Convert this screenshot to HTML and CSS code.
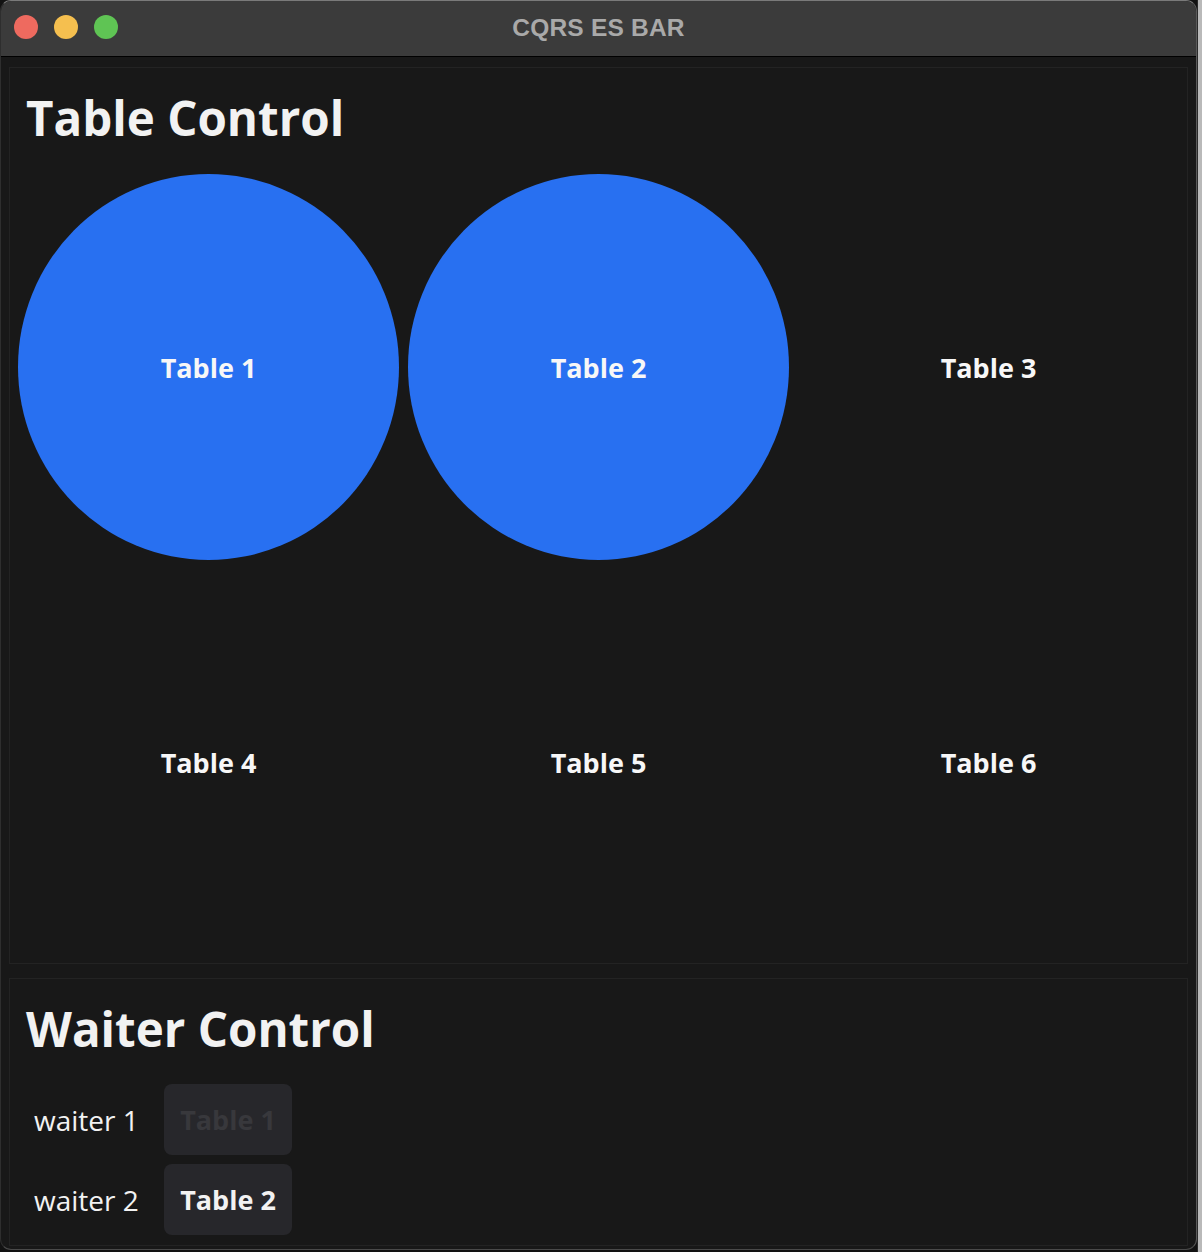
FILE: index.html
```html
<!DOCTYPE html>
<html>
<head>
<meta charset="utf-8">
<title>CQRS ES BAR</title>
<link rel="stylesheet" href="styles.css">
</head>
<body>
<div class="screen">
  <div class="window">
    <div class="titlebar">
      <div class="lights">
        <span class="light red"></span>
        <span class="light yellow"></span>
        <span class="light green"></span>
      </div>
      <div class="wtitle">CQRS ES BAR</div>
    </div>
    <div class="content">
      <section class="panel tables-panel">
        <h1 class="ptitle">Table Control</h1>
        <div class="table-grid">
          <div class="table active">Table 1</div>
          <div class="table active">Table 2</div>
          <div class="table">Table 3</div>
          <div class="table">Table 4</div>
          <div class="table">Table 5</div>
          <div class="table">Table 6</div>
        </div>
      </section>
      <section class="panel waiters-panel">
        <h1 class="ptitle">Waiter Control</h1>
        <div class="waiters">
          <div class="waiter-row">
            <span class="wname">waiter 1</span>
            <button class="tbtn disabled">Table 1</button>
          </div>
          <div class="waiter-row">
            <span class="wname">waiter 2</span>
            <button class="tbtn">Table 2</button>
          </div>
        </div>
      </section>
    </div>
  </div>
  <div class="desk"></div>
</div>
</body>
</html>
```
FILE: styles.css
```css
* { box-sizing: border-box; }
html, body { margin: 0; padding: 0; background: #121212; }
body { width: 1202px; height: 1252px; overflow: hidden; }

.screen { display: flex; height: 1252px; }

.window {
  width: 1197px;
  height: 1250px;
  border: 1px solid #2e2e2e;
  border-top-color: #7a7a7a;
  border-right-color: #5a5a5a;
  border-bottom-color: #4a4a4a;
  border-radius: 11px;
  overflow: hidden;
  background: #181818;
  display: flex;
  flex-direction: column;
}

.desk {
  width: 5px;
  background: #b9b9b9;
  border-left: 1px solid #2a2a2a;
}

.titlebar {
  height: 56px;
  flex: none;
  background: #3b3b3b;
  border-bottom: 1px solid #000;
  position: relative;
  display: flex;
  align-items: center;
  justify-content: center;
}
.lights {
  position: absolute;
  left: 13px;
  top: 14px;
  display: flex;
  gap: 16px;
}
.light { width: 24px; height: 24px; border-radius: 50%; display: block; }
.red { background: #ee6a5f; }
.yellow { background: #f5bf4f; }
.green { background: #5fc454; }
.wtitle {
  font-family: "Liberation Sans", Arial, sans-serif;
  font-weight: 700;
  font-size: 24.5px;
  color: #a9a9a9;
  letter-spacing: 0.2px;
  margin-top: -2px;
}

.content {
  padding: 10px 8px 0 8px;
  display: flex;
  flex-direction: column;
  gap: 14px;
  font-family: "Open Sans", "Noto Sans", sans-serif;
  color: #f2f2f2;
}

.panel {
  border: 1px solid #232323;
  background: #181818;
}

.ptitle {
  margin: 0;
  font-size: 47.5px;
  font-weight: 700;
  line-height: 66px;
  padding: 17px 0 0 16px;
  color: #f2f2f2;
}

.tables-panel { height: 897px; padding: 0 8px 8px 8px; }
.tables-panel .ptitle { padding-left: 8px; }

.table-grid {
  margin-top: 23px;
  display: grid;
  grid-template-columns: repeat(3, 1fr);
  grid-template-rows: 386px 386px;
  column-gap: 9px;
  row-gap: 9px;
}

.table {
  display: flex;
  align-items: center;
  justify-content: center;
  font-size: 27px;
  font-weight: 700;
  color: #f7f7f7;
  border-radius: 50%;
}
.table.active { background: #2870f1; }

.waiters-panel { padding: 0 0 9px 8px; height: 268px; }
.waiters-panel .ptitle { padding-left: 8px; padding-top: 17px; }

.waiters {
  margin-top: 22px;
  display: flex;
  flex-direction: column;
  gap: 9px;
}
.waiter-row {
  display: flex;
  align-items: center;
}
.wname {
  width: 146px;
  padding-left: 16px;
  font-size: 28px;
  font-weight: 400;
  color: #f2f2f2;
}
.tbtn {
  width: 128px;
  height: 71px;
  border: none;
  border-radius: 8px;
  background: #27272b;
  font-family: "Open Sans", "Noto Sans", sans-serif;
  font-size: 27px;
  font-weight: 700;
  color: #f2f2f2;
  padding: 0;
}
.tbtn.disabled { color: #38383c; }
```
